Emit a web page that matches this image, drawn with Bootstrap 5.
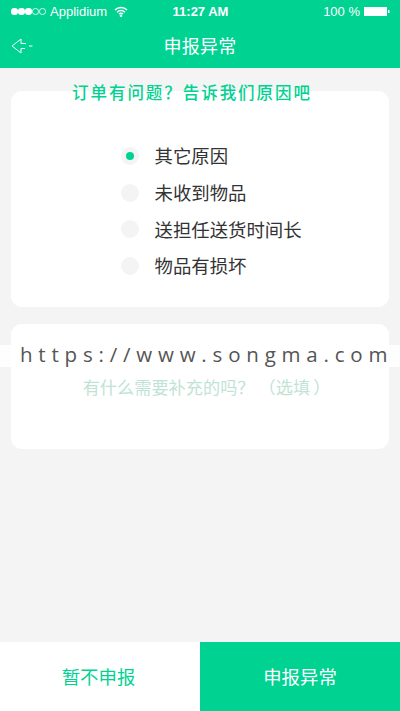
<!DOCTYPE html>
<html lang="zh-CN">
<head>
<meta charset="utf-8">
<meta name="viewport" content="width=device-width, initial-scale=1">
<title>申报异常</title>
<link href="https://cdn.jsdelivr.net/npm/bootstrap@5.3.0/dist/css/bootstrap.min.css" rel="stylesheet">
<style>
html,body{height:100%}
body{background:#f4f4f4;font-family:"Noto Sans CJK SC","Liberation Sans",sans-serif;color:#333;overflow:hidden}
.app-shell{height:711px;position:relative}
.top-area{background:#00d292;color:#fff;height:68px;flex:none}
.status-row{height:23px;padding:0 10px 0 11px;font-family:"Liberation Sans",sans-serif;font-size:13px;line-height:23px}
.status-side{flex:1 1 0}
.status-time{font-weight:700;font-size:13px}
.dot-on,.dot-off{display:inline-block;width:6.5px;height:6.5px;border-radius:50%;margin-right:.5px}
.dot-on{background:#fff}
.dot-off{border:1px solid #fff;opacity:.8}
.wifi{margin-left:7px}
.title-row{height:45px;position:relative}
.page-title{font-size:18px;line-height:45px;letter-spacing:.3px}
.back-icon{position:absolute;left:11px;top:14px}
.hint{color:#00d292;font-size:16.500px;line-height:20px;letter-spacing:1.950px;margin-top:14px;padding-right:16px;position:relative;z-index:1;font-weight:500}
.panel{background:#fff;border-radius:11px;margin:0 11px}
.panel-one{height:216px;margin-top:-11px;padding:46.600px 0 0 110px}
.panel-two{height:125px;margin-top:17px;padding:50px 0 0 13px}
.opt{height:36.700px;gap:15.500px;font-size:18.400px;color:#333}
.tick{width:18px;height:18px;border-radius:50%;background:#f4f4f4;flex:none}
.tick.on::after{content:"";width:8px;height:8px;border-radius:50%;background:#00d292}
.note{color:#bfe3d5;font-size:17.200px;line-height:26px}
.paren-start{margin-left:4px}
.paren-end{margin-left:3px}
.band{position:absolute;left:0;right:0;top:345px;height:22px;background:rgba(255,255,255,.9);font-family:"Open Sans",sans-serif;font-size:20.500px;line-height:19px;letter-spacing:5.800px;color:#555;padding-left:20px;white-space:nowrap}
.foot{height:69px;flex:none;margin-top:auto}
.foot-btn{flex:none;width:50%;border:0;border-radius:0;font-size:18.400px;height:69px;padding:0}
.foot-light{background:#fff;color:#00d292;padding-right:3px}
.foot-solid{background:#00d292;color:#fff}
</style>
</head>
<body>
<div class="app-shell d-flex flex-column">
  <header class="top-area">
    <div class="status-row d-flex align-items-center">
      <div class="status-side d-flex align-items-center">
        <span class="dot-on"></span><span class="dot-on"></span><span class="dot-on"></span><span class="dot-off"></span><span class="dot-off"></span>
        <span class="ms-1">Applidium</span>
        <svg class="wifi" width="14" height="11" viewBox="0 0 15 11" fill="none" stroke="#fff" stroke-width="1.6"><path d="M1 4a9 9 0 0 1 13 0"/><path d="M3.300 6.200a5.800 5.800 0 0 1 8.400 0"/><path d="M5.400 8.300a2.800 2.800 0 0 1 4.200 0"/><circle cx="7.500" cy="10" r=".6" fill="#fff"/></svg>
      </div>
      <div class="status-time">11:27 AM</div>
      <div class="status-side d-flex align-items-center justify-content-end">
        <span>100 %</span>
        <svg class="ms-1" width="26" height="11" viewBox="0 0 26 11"><rect x="0" y="1" width="23" height="9" fill="#fff"/><rect x="24" y="4" width="1.500" height="3" fill="#fff"/></svg>
      </div>
    </div>
    <div class="title-row text-center">
      <svg class="back-icon" width="22" height="18" viewBox="0 0 22 18" fill="none" stroke="#fff" stroke-width="1"><path d="M10 2 1 9l9 7v-4.500h4M10 2v4.500h5"/><path d="M18 9h3.500"/></svg>
      <div class="page-title">申报异常</div>
    </div>
  </header>

  <div class="hint text-center">订单有问题？告诉我们原因吧</div>

  <section class="panel panel-one">
    <div class="opt d-flex align-items-center"><span class="tick on d-flex align-items-center justify-content-center"></span><span>其它原因</span></div>
    <div class="opt d-flex align-items-center"><span class="tick"></span><span>未收到物品</span></div>
    <div class="opt d-flex align-items-center"><span class="tick"></span><span>送担任送货时间长</span></div>
    <div class="opt d-flex align-items-center"><span class="tick"></span><span>物品有损坏</span></div>
  </section>

  <section class="panel panel-two">
    <div class="note text-center">有什么需要补充的吗？<span class="paren-start">（</span>选填<span class="paren-end">）</span></div>
  </section>

  <footer class="foot d-flex">
    <button type="button" class="btn foot-btn foot-light">暂不申报</button>
    <button type="button" class="btn foot-btn foot-solid">申报异常</button>
  </footer>

  <div class="band">https://www.songma.com</div>
</div>
<script src="https://cdn.jsdelivr.net/npm/bootstrap@5.3.0/dist/js/bootstrap.bundle.min.js"></script>
</body>
</html>
